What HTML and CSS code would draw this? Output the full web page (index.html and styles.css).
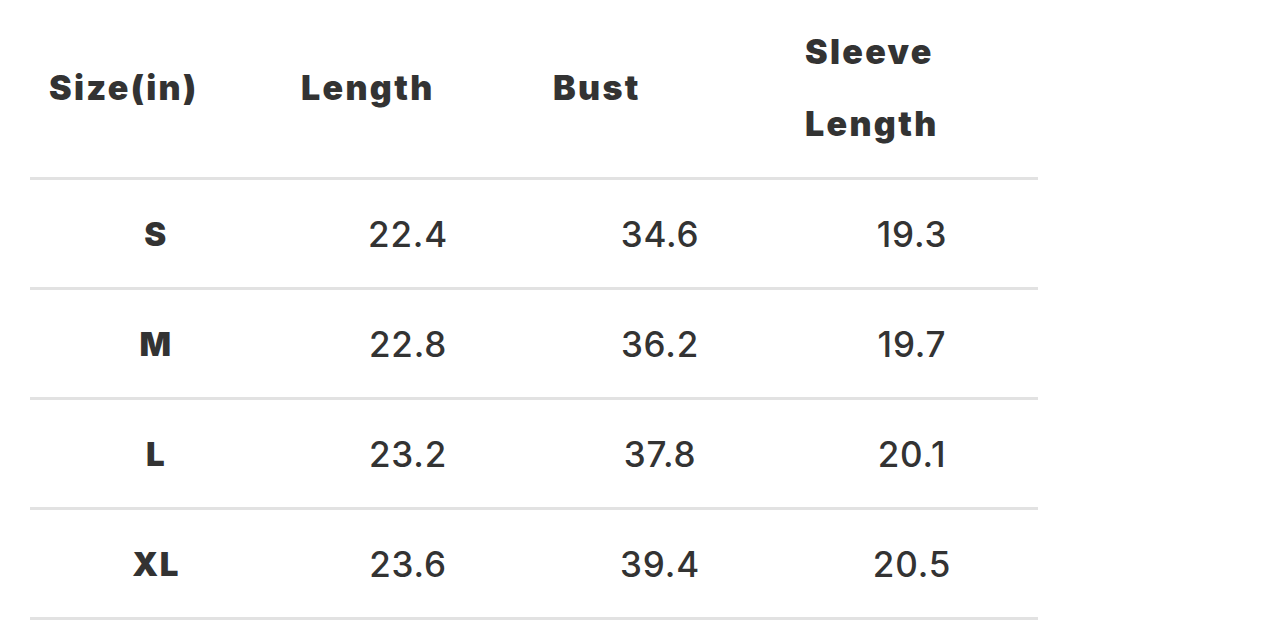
FILE: index.html
```html
<!DOCTYPE html>
<html>
<head>
<meta charset="utf-8">
<link rel="stylesheet" href="styles.css">
</head>
<body>
<div class="table">
  <div class="row head">
    <div class="cell">Size(in)</div>
    <div class="cell">Length</div>
    <div class="cell">Bust</div>
    <div class="cell">Sleeve<br>Length</div>
  </div>
  <div class="row">
    <div class="cell size">S</div>
    <div class="cell">22.4</div>
    <div class="cell">34.6</div>
    <div class="cell">19.3</div>
  </div>
  <div class="row">
    <div class="cell size">M</div>
    <div class="cell">22.8</div>
    <div class="cell">36.2</div>
    <div class="cell">19.7</div>
  </div>
  <div class="row">
    <div class="cell size">L</div>
    <div class="cell">23.2</div>
    <div class="cell">37.8</div>
    <div class="cell">20.1</div>
  </div>
  <div class="row">
    <div class="cell size">XL</div>
    <div class="cell">23.6</div>
    <div class="cell">39.4</div>
    <div class="cell">20.5</div>
  </div>
</div>
</body>
</html>
```

FILE: styles.css
```css
html, body {
  margin: 0;
  padding: 0;
  background: #ffffff;
}
.table {
  margin-left: 30px;
  width: 1008px;
  color: #333333;
  font-family: Inter, "Liberation Sans", sans-serif;
}
.row {
  display: grid;
  grid-template-columns: repeat(4, 252px);
  height: 107px;
  border-bottom: 3px solid #e2e2e2;
}
.row .cell {
  display: flex;
  align-items: center;
  justify-content: center;
  font-size: 35px;
  font-weight: 450;
  letter-spacing: 0.8px;
}
.row .cell.size {
  font-weight: 900;
  font-size: 33px;
  letter-spacing: 1.5px;
}
.row.head {
  height: 177px;
}
.row.head .cell {
  justify-content: flex-start;
  padding-left: 19px;
  font-weight: 900;
  font-size: 34px;
  letter-spacing: 2.3px;
  line-height: 72px;
  padding-bottom: 2px;
}
```
